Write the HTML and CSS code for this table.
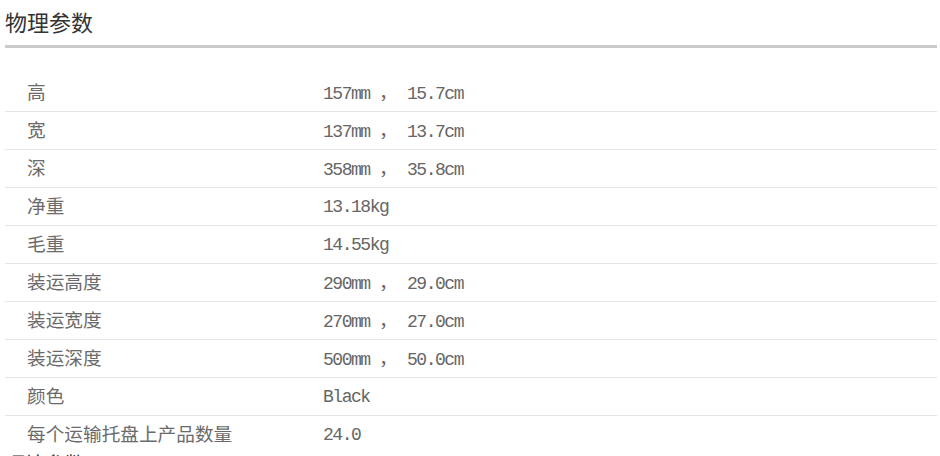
FILE: index.html
```html
<!DOCTYPE html>
<html lang="zh-CN">
<head>
<meta charset="utf-8">
<title>物理参数</title>
<link rel="stylesheet" href="styles.css">
</head>
<body>
<section class="section">
  <h2 class="section-title">物理参数</h2>
  <div class="spec-table">
    <div class="spec-row"><div class="spec-label">高</div><div class="spec-value">157mm <span class="sep">，</span> 15.7cm</div></div>
    <div class="spec-row"><div class="spec-label">宽</div><div class="spec-value">137mm <span class="sep">，</span> 13.7cm</div></div>
    <div class="spec-row"><div class="spec-label">深</div><div class="spec-value">358mm <span class="sep">，</span> 35.8cm</div></div>
    <div class="spec-row"><div class="spec-label">净重</div><div class="spec-value">13.18kg</div></div>
    <div class="spec-row"><div class="spec-label">毛重</div><div class="spec-value">14.55kg</div></div>
    <div class="spec-row"><div class="spec-label">装运高度</div><div class="spec-value">290mm <span class="sep">，</span> 29.0cm</div></div>
    <div class="spec-row"><div class="spec-label">装运宽度</div><div class="spec-value">270mm <span class="sep">，</span> 27.0cm</div></div>
    <div class="spec-row"><div class="spec-label">装运深度</div><div class="spec-value">500mm <span class="sep">，</span> 50.0cm</div></div>
    <div class="spec-row"><div class="spec-label">颜色</div><div class="spec-value">Black</div></div>
    <div class="spec-row spec-row-last"><div class="spec-label">每个运输托盘上产品数量</div><div class="spec-value">24.0</div></div>
  </div>
</section>
<section class="section">
  <h2 class="section-title next-title">环境参数</h2>
</section>
</body>
</html>
```

FILE: styles.css
```css
html, body {
  margin: 0;
  padding: 0;
  background: #ffffff;
}

body {
  padding: 0 3px 0 5px;
  font-family: "Noto Sans CJK SC", "Noto Sans", sans-serif;
}

.section-title {
  margin: 0;
  padding: 3px 0 6px 0;
  font-size: 22px;
  line-height: 36px;
  font-weight: normal;
  color: #333333;
  border-bottom: 3px solid #cbcbcb;
}

.spec-table {
  margin-top: 26px;
  display: flex;
  flex-direction: column;
}

.spec-row {
  display: grid;
  grid-template-columns: 318px 1fr;
  height: 37px;
  align-items: center;
  border-bottom: 1px solid #e6e6e6;
}

.spec-row-last {
  border-bottom: none;
}

.spec-label {
  padding-left: 22px;
  padding-bottom: 4px;
  font-family: "Noto Sans CJK SC", sans-serif;
  font-size: 18.67px;
  color: #6b6b6b;
  line-height: 24px;
}

.spec-value {
  font-family: "Liberation Mono", "Noto Sans CJK SC", monospace;
  font-size: 18px;
  letter-spacing: -1.47px;
  color: #666666;
  white-space: pre;
  line-height: 24px;
}

.sep {
  display: inline-block;
  width: 18.67px;
  letter-spacing: 0;
  font-family: "Noto Sans CJK SC", sans-serif;
  font-size: 18.67px;
}

.next-title {
  margin-top: 1px;
  padding: 0;
  font-size: 20px;
  line-height: 20px;
  font-weight: normal;
  border-bottom: none;
}
```
